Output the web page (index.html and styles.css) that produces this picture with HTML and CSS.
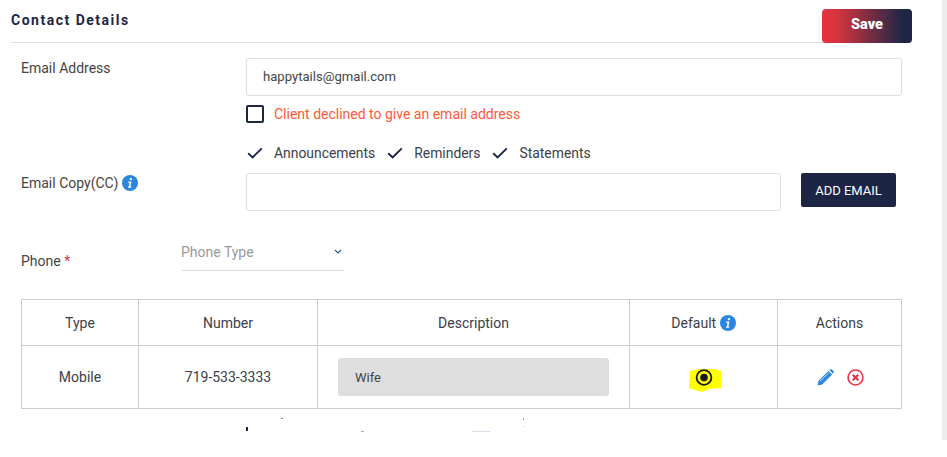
FILE: index.html
```html
<!DOCTYPE html>
<html lang="en">
<head>
<meta charset="utf-8">
<title>Contact Details</title>
<link rel="stylesheet" href="styles.css">
</head>
<body>
<div class="page">
  <main class="panel">
    <header class="head">
      <h2 class="title">Contact Details</h2>
      <button class="save" type="button">Save</button>
    </header>
    <section class="form">
      <div class="row row-email">
        <label class="label">Email Address</label>
        <div class="field-col">
          <div class="input input-email">happytails@gmail.com</div>
          <div class="declined"><span class="box"></span><span>Client declined to give an email address</span></div>
          <div class="prefs">
            <span class="pref"><svg class="check" viewBox="0 0 16 12"><path d="M1.2 6.2 5.6 10.4 14.8 1.4" fill="none" stroke="#1c2544" stroke-width="1.9"/></svg>Announcements</span>
            <span class="pref"><svg class="check" viewBox="0 0 16 12"><path d="M1.2 6.2 5.6 10.4 14.8 1.4" fill="none" stroke="#1c2544" stroke-width="1.9"/></svg>Reminders</span>
            <span class="pref"><svg class="check" viewBox="0 0 16 12"><path d="M1.2 6.2 5.6 10.4 14.8 1.4" fill="none" stroke="#1c2544" stroke-width="1.9"/></svg>Statements</span>
          </div>
        </div>
      </div>
      <div class="row row-cc">
        <label class="label label-cc">Email Copy(CC)
          <svg class="info" viewBox="0 0 16 16"><circle cx="8" cy="8" r="8" fill="#2a86e0"/><path d="M8.9 2.9a1.2 1.2 0 1 1-.01 2.4 1.2 1.2 0 0 1 .01-2.4zM6.3 6.6h3.1l-1 5h.9l-.2 1.2H5.9l.2-1.2h.8l.7-3.8h-1.500z" fill="#fff"/></svg>
        </label>
        <div class="input input-cc"></div>
        <button class="add" type="button">ADD EMAIL</button>
      </div>
      <div class="row row-phone">
        <label class="label label-phone">Phone <span class="req">*</span></label>
        <div class="select"><span>Phone Type</span><svg class="chev" viewBox="0 0 8 5"><path d="M1 1 4 4 7 1" fill="none" stroke="#2d5f80" stroke-width="1.200"/></svg></div>
      </div>
      <table class="grid">
        <colgroup><col class="c1"><col class="c2"><col class="c3"><col class="c4"><col class="c5"></colgroup>
        <thead>
          <tr><th>Type</th><th>Number</th><th>Description</th><th>Default <svg class="info info-th" viewBox="0 0 16 16"><circle cx="8" cy="8" r="8" fill="#2a86e0"/><path d="M8.9 2.9a1.2 1.2 0 1 1-.01 2.4 1.2 1.2 0 0 1 .01-2.4zM6.3 6.6h3.1l-1 5h.9l-.2 1.2H5.9l.2-1.2h.8l.7-3.8h-1.500z" fill="#fff"/></svg></th><th>Actions</th></tr>
        </thead>
        <tbody>
          <tr>
            <td>Mobile</td>
            <td>719-533-3333</td>
            <td class="desc-cell"><div class="desc">Wife</div></td>
            <td><span class="radio-wrap"><svg class="radio" viewBox="0 0 32 24"><path d="M1 3 9 1 26 1 32 3 32 20 20 21 13 24 6 22 0 20Z" fill="#ffff00"/><circle cx="15" cy="9.500" r="7.400" fill="none" stroke="#1a1a1a" stroke-width="1.800"/><circle cx="15" cy="9.500" r="3.800" fill="#1a1a1a"/></svg></span></td>
            <td>
              <span class="actions">
                <svg class="act" viewBox="0 0 17 17"><path d="M0.600 16.400 1.500 11.800 11.400 1.900 15.100 5.600 5.200 15.500ZM12.300 1 13.200 0.400a1.200 1.200 0 0 1 1.600 0L16.500 2.100a1.200 1.200 0 0 1 0 1.600L16 4.700Z" fill="#2a86e0"/><path d="M3 12.200 11.800 3.800" stroke="#fff" stroke-width="0.700"/></svg>
                <svg class="act" viewBox="0 0 16 16"><circle cx="8" cy="8" r="7" fill="none" stroke="#e53246" stroke-width="1.500"/><path d="M5.400 5.400 10.600 10.600M10.600 5.400 5.400 10.600" stroke="#e53246" stroke-width="2"/></svg>
              </span>
            </td>
          </tr>
        </tbody>
      </table>
      <svg class="specks" viewBox="0 0 540 24"><rect x="246" y="18" width="2" height="4" fill="#1c2544"/><rect x="281" y="9" width="2" height="1" fill="#6f86c4"/><rect x="361" y="22" width="3" height="1" fill="#9fb0d8"/><rect x="472" y="22" width="18" height="1" fill="#d5dced"/><rect x="523" y="9" width="1" height="2" fill="#8fa2d0"/><rect x="523" y="17" width="1" height="1" fill="#c5d0e8"/></svg>
    </section>
  </main>
  <aside class="gutter"></aside>
</div>
</body>
</html>
```
FILE: styles.css
```css
* { box-sizing: border-box; }
html, body { margin: 0; padding: 0; background: #fff; }
body { font-family: Roboto, "Liberation Sans", sans-serif; font-size: 14px; color: #3a3f4b; overflow: hidden; }
.page { display: flex; width: 947px; height: 457px; align-items: flex-start; }
.panel { width: 942px; height: 440px; flex: none; padding: 9px 0 0 11px; }
.gutter { width: 5px; height: 440px; background: #ededed; flex: none; }
.head { width: 901px; height: 34px; display: flex; justify-content: space-between; align-items: flex-start; border-bottom: 1px solid #dedede; }
.title { margin: 3px 0 0; font-size: 14px; line-height: 16px; font-weight: 700; color: #1c2544; letter-spacing: 1.5px; }
.save { width: 90px; height: 34px; border: 0; border-radius: 4px; background: linear-gradient(90deg, #e5333f 0%, #d9343f 15%, #1e2646 90%); color: #fff; font: 900 14.500px Roboto, sans-serif; padding: 0 0 3px 0; margin: 0; }
.form { padding: 15px 0 0 10px; width: 891px; }
.row { display: flex; align-items: flex-start; }
.label { color: #444; line-height: 20px; }
.row-email .label { width: 225px; flex: none; margin-top: 0; }
.field-col { width: 656px; }
.input { border: 1px solid #dedede; border-radius: 3px; background: #fff; height: 38px; }
.input-email { line-height: 35px; padding-left: 16px; font-size: 13.100px; color: #444; }
.declined { display: flex; align-items: center; gap: 10px; margin-top: 9px; height: 18px; color: #ff5a36; }
.box { width: 18px; height: 18px; border: 2px solid #1c2544; border-radius: 2px; flex: none; }
.prefs { display: flex; gap: 11px; margin-top: 21px; height: 18px; align-items: center; font-size: 13.900px; }
.pref { display: inline-flex; align-items: center; color: #3a3f4b; }
.check { width: 16px; height: 12px; margin: 0 11px 0 1px; flex: none; }
.row-cc { margin-top: 11px; }
.label-cc { width: 225px; flex: none; display: flex; align-items: center; gap: 4px; height: 20px; }
.info { width: 16px; height: 16px; flex: none; }
.info-th { vertical-align: -3px; }
.input-cc { width: 535px; }
.add { width: 95px; height: 34px; margin: 0 0 0 20px; padding: 0; border: 0; border-radius: 2px; background: #1c2544; color: #fff; font: 400 13px Roboto, sans-serif; }
.row-phone { margin-top: 24px; height: 64px; }
.label-phone { width: 160px; flex: none; margin-top: 16px; }
.req { color: #e8334a; }
.select { width: 163px; height: 36px; border-bottom: 1px solid #dedede; display: flex; justify-content: space-between; align-items: center; color: #9a9a9a; padding: 0 1px 0 0; }
.select span { margin-top: -1px; }
.chev { width: 8px; height: 5px; margin-right: 1px; margin-top: -2px; }
.grid { width: 880px; border-collapse: collapse; table-layout: fixed; color: #3a3f4b; }
.grid th, .grid td { border: 1px solid #cdcdcd; text-align: center; padding: 0; font-weight: 400; }
.grid th { height: 46px; }
.grid td { height: 63px; }
.c1 { width: 117px; }
.c2 { width: 179px; }
.c3 { width: 312px; }
.c4 { width: 148px; }
.c5 { width: 124px; }
.desc-cell { padding: 0 20px !important; }
.desc { background: #dedede; border-radius: 3px; height: 38px; line-height: 39px; text-align: left; padding-left: 17px; font-size: 13px; color: #444; }
.radio-wrap { display: inline-flex; margin-left: 2px; margin-top: 9px; }
.radio { width: 32px; height: 24px; display: block; }
.actions { display: inline-flex; align-items: center; gap: 13px; margin-left: 1px; margin-top: 3px; }
.act { width: 17px; height: 17px; display: block; }
.specks { display: block; width: 540px; height: 24px; margin: 0 0 0 -21px; }
```
